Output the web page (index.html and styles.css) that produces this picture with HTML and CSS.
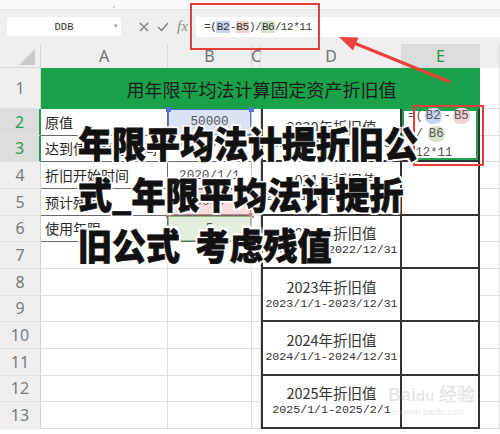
FILE: index.html
```html
<!DOCTYPE html>
<html lang="zh-CN">
<head>
<meta charset="utf-8">
<title>年限平均法计提折旧公式</title>
<link rel="stylesheet" href="styles.css">
</head>
<body>
<div class="app">
  <div class="topstrip"><span class="tiny">⌟</span></div>
  <div class="toolbar">
    <div class="namebox"><span class="nb-text">DDB</span><span class="nb-drop">▾</span></div>
    <svg class="ic-x" width="10" height="10" viewBox="0 0 10 10"><path d="M1 1L9 9M9 1L1 9" stroke="#7b7b7b" stroke-width="1.2" fill="none"/></svg>
    <svg class="ic-check" width="12" height="10" viewBox="0 0 12 10"><path d="M1 5L4.5 8.5L11 1" stroke="#7b7b7b" stroke-width="1.2" fill="none"/></svg>
    <span class="fx">fx</span>
    <div class="formula">=(<span class="ref rb">B2</span>-<span class="ref rr">B5</span>)/<span class="ref rg">B6</span>/12*11</div>
  </div>

  <div class="sheet">
    <div class="c corner"><svg width="16" height="16" viewBox="0 0 16 16"><path d="M16 0V16H0Z" fill="#c9c9c9"/></svg></div>
    <div class="c h">A</div>
    <div class="c h">B</div>
    <div class="c h">C</div>
    <div class="c h">D</div>
    <div class="c h hsel">E</div>
    <div class="c h"></div>

    <div class="c rh">1</div>
    <div class="c title">用年限平均法计算固定资产折旧值</div>
    <div class="c"></div>

    <div class="c rh rsel">2</div>
    <div class="c a">原值</div>
    <div class="c b hl-blue">50000<span class="hd hd-bl"></span><span class="hd hd-br"></span></div>
    <div class="c"></div>
    <div class="c d"><span class="d1">2020年折旧值</span><span class="d2">2020/1/1-2020/12/31</span></div>
    <div class="c e esel">
      <div class="eline">=(<span class="pill pb">B2</span>-<span class="pill pr">B5</span></div>
      <div class="eline">)/<span class="pill pg">B6</span></div>
      <div class="eline">/12*11</div>
    </div>
    <div class="c"></div>

    <div class="c rh rsel">3</div>
    <div class="c a">达到使用状态时间</div>
    <div class="c b">2020/1/1</div>
    <div class="c"></div>
    <div class="c"></div>

    <div class="c rh">4</div>
    <div class="c a">折旧开始时间</div>
    <div class="c b">2020/1/1</div>
    <div class="c"></div>
    <div class="c d"><span class="d1">2021年折旧值</span><span class="d2">2021/1/1-2021/12/31</span></div>
    <div class="c e"></div>
    <div class="c"></div>

    <div class="c rh">5</div>
    <div class="c a">预计残值</div>
    <div class="c b hl-red">5000<span class="hd hd-rl"></span><span class="hd hd-rr"></span></div>
    <div class="c"></div>
    <div class="c"></div>

    <div class="c rh">6</div>
    <div class="c a">使用年限</div>
    <div class="c b hl-green">5<span class="hd hd-gl"></span><span class="hd hd-gr"></span></div>
    <div class="c"></div>
    <div class="c d"><span class="d1">2022年折旧值</span><span class="d2">2022/1/1-2022/12/31</span></div>
    <div class="c e"></div>
    <div class="c"></div>

    <div class="c rh">7</div>
    <div class="c"></div>
    <div class="c"></div>
    <div class="c"></div>
    <div class="c"></div>

    <div class="c rh">8</div>
    <div class="c"></div>
    <div class="c"></div>
    <div class="c"></div>
    <div class="c d"><span class="d1">2023年折旧值</span><span class="d2">2023/1/1-2023/12/31</span></div>
    <div class="c e"></div>
    <div class="c"></div>

    <div class="c rh">9</div>
    <div class="c"></div>
    <div class="c"></div>
    <div class="c"></div>
    <div class="c"></div>

    <div class="c rh">10</div>
    <div class="c"></div>
    <div class="c"></div>
    <div class="c"></div>
    <div class="c d"><span class="d1">2024年折旧值</span><span class="d2">2024/1/1-2024/12/31</span></div>
    <div class="c e"></div>
    <div class="c"></div>

    <div class="c rh">11</div>
    <div class="c"></div>
    <div class="c"></div>
    <div class="c"></div>
    <div class="c"></div>

    <div class="c rh">12</div>
    <div class="c"></div>
    <div class="c"></div>
    <div class="c"></div>
    <div class="c d"><span class="d1">2025年折旧值</span><span class="d2">2025/1/1-2025/2/1</span></div>
    <div class="c e"></div>
    <div class="c"></div>

    <div class="c rh">13</div>
    <div class="c"></div>
    <div class="c"></div>
    <div class="c"></div>
    <div class="c"></div>
  </div>

  <div class="redbox-formula"></div>
  <div class="redbox-cell"></div>
  <svg class="arrow" width="500" height="434" viewBox="0 0 500 434">
    <path d="M450 82L354 43" stroke="#e8423c" stroke-width="3" fill="none"/>
    <path d="M339 37L358.5 37.5L353 50.5Z" fill="#e8423c"/>
  </svg>

  <div class="watermark"><span class="wm-big">Bai<span class="wm-paw">du</span> 经验</span><span class="wm-small">jingyan.baidu.com</span></div>

  <div class="headline">
    <span class="hl-line">年限平均法计提折旧公</span>
    <span class="hl-line">式_年限平均法计提折</span>
    <span class="hl-line">旧公式&nbsp; 考虑残值</span>
  </div>
</div>
</body>
</html>
```

FILE: styles.css
```css
* { box-sizing: border-box; }
html, body { margin: 0; padding: 0; }
body {
  width: 500px;
  height: 434px;
  overflow: hidden;
  background: #ffffff;
  font-family: "Noto Sans CJK SC", "Noto Sans", sans-serif;
}
.app {
  position: relative;
  width: 500px;
  height: 434px;
  overflow: hidden;
}
.topstrip {
  height: 10px;
  background: #fafafa;
  border-bottom: 1px solid #e6e6e6;
  position: relative;
}
.tiny {
  position: absolute;
  left: 112px;
  top: 0;
  font-size: 7px;
  line-height: 8px;
  color: #999;
}
.toolbar {
  height: 34px;
  background: #efefef;
  display: flex;
  align-items: flex-start;
  padding-top: 7px;
}
.namebox {
  margin-left: 7px;
  width: 114px;
  height: 19px;
  background: #ffffff;
  border-radius: 3px;
  display: flex;
  align-items: center;
  position: relative;
}
.nb-text {
  flex: 1;
  text-align: center;
  font-family: "Liberation Mono", monospace;
  font-size: 10.5px;
  color: #333;
}
.nb-drop {
  position: absolute;
  right: 3px;
  top: 3px;
  font-size: 7px;
  color: #999;
}
.ic-x { margin-left: 18px; margin-top: 5px; }
.ic-check { margin-left: 8px; margin-top: 5px; }
.fx {
  margin-left: 8px;
  font-family: "Liberation Serif", serif;
  font-style: italic;
  font-size: 15px;
  color: #8a8a8a;
  line-height: 19px;
  width: 13px;
}
.formula {
  margin-left: 6px;
  flex: 1;
  height: 20px;
  background: #ffffff;
  border-radius: 3px 0 0 3px;
  padding-left: 8px;
  font-family: "Liberation Mono", monospace;
  font-size: 11px;
  letter-spacing: -0.45px;
  line-height: 20px;
  color: #333;
}
.ref { padding: 0 0.5px; }
.rb { background: #c7d3ee; }
.rr { background: #f0cfcf; }
.rg { background: #d5e2c9; }

.sheet {
  display: grid;
  grid-template-columns: 41px 127px 84px 9px 141px 78px 20px;
  grid-template-rows: 24px 41px repeat(12, 26.667px);
}
.c {
  border-right: 1px solid #dedede;
  border-bottom: 1px solid #dedede;
  display: flex;
  align-items: center;
  min-width: 0;
  white-space: nowrap;
  position: relative;
}
.corner {
  background: #efefef;
  justify-content: flex-end;
  align-items: flex-end;
  padding: 0 5px 2px 0;
  border-color: #d6d6d6;
}
.h {
  background: #efefef;
  justify-content: center;
  font-family: "Noto Sans", sans-serif;
  font-size: 16px;
  color: #6f6f6f;
  border-right: 1px solid #dadada;
  border-bottom: none;
}
.hsel {
  background: #dcdcdc;
  color: #1f9a4b;
}
.rh {
  background: #efefef;
  justify-content: center;
  font-family: "Noto Sans", sans-serif;
  font-size: 16px;
  color: #7a7a7a;
  border-right: 1px solid #d2d2d2;
  border-bottom: 1px solid #e2e2e2;
}
.rsel {
  background: #dcdcdc;
  color: #2a9a52;
  border-right: 2px solid #2a9a52;
}
.title {
  grid-column: span 5;
  background: #19a24a;
  justify-content: center;
  font-size: 18px;
  color: #1c1c1c;
  border-right: none;
  border-bottom: none;
  padding-left: 2px;
}
.a {
  border-right: 1px solid #6a6a6a;
  border-bottom: 1px solid #6a6a6a;
  padding-left: 4px;
  font-size: 14px;
  color: #2a2a2a;
}
.b {
  justify-content: center;
  border-right: 1px solid #c8c8c8;
  border-bottom: 1px solid #6a6a6a;
  font-family: "Liberation Mono", monospace;
  font-size: 12.7px;
  color: #555;
}
.hl-blue { background: #dae3f4; box-shadow: inset 0 0 0 1px #5576d4; }
.hl-red { background: #f6dede; box-shadow: inset 0 0 0 1px #c98585; }
.hl-green { background: #e2eedb; box-shadow: inset 0 0 0 1px #93b583; }
.hd {
  position: absolute;
  width: 5px;
  height: 5px;
  top: -2px;
}
.hd-bl, .hd-br { background: #5576d4; }
.hd-rl, .hd-rr { background: #c98585; top: auto; bottom: -3px; }
.hd-gl, .hd-gr { background: #93b583; top: auto; bottom: -3px; }
.hd-bl, .hd-rl, .hd-gl { left: -2px; }
.hd-br, .hd-rr, .hd-gr { right: -3px; }

.d {
  grid-row: span 2;
  flex-direction: column;
  justify-content: center;
  border-left: 2px solid #333;
  border-right: 2px solid #333;
  border-bottom: 2px solid #333;
  color: #333;
}
.d1 {
  font-size: 14.5px;
  line-height: 17px;
}
.d2 {
  font-family: "Liberation Mono", monospace;
  font-size: 11.6px;
  line-height: 17px;
}
.e {
  grid-row: span 2;
  flex-direction: column;
  justify-content: center;
  align-items: flex-start;
  border-right: 2px solid #333;
  border-bottom: 2px solid #333;
}
.esel {
  box-shadow: inset 0 0 0 2px #22a04e;
  padding-left: 6px;
}
.eline {
  font-family: "Liberation Mono", monospace;
  font-size: 12.3px;
  line-height: 18.5px;
  color: #555;
  white-space: pre;
}
.pill {
  border-radius: 7px;
  padding: 1px 1px;
  margin: 0 2px;
}
.pb { background: #c9d4ef; }
.pr { background: #f1d1d1; }
.pg { background: #d7e4cb; margin-left: 5px; }

.redbox-formula {
  position: absolute;
  left: 190px;
  top: 3px;
  width: 130px;
  height: 47px;
  border: 2px solid #e53d3a;
}
.redbox-cell {
  position: absolute;
  left: 413px;
  top: 105px;
  width: 71px;
  height: 61px;
  border: 2.5px solid #e53d3a;
}
.arrow {
  position: absolute;
  left: 0;
  top: 0;
}
.watermark {
  position: absolute;
  left: 388px;
  top: 384px;
  display: flex;
  flex-direction: column;
  align-items: flex-start;
  color: rgba(200, 200, 200, 0.45);
  white-space: nowrap;
}
.wm-big {
  font-family: "Liberation Sans", sans-serif;
  font-size: 18px;
  font-weight: 700;
  line-height: 22px;
  white-space: nowrap;
}
.wm-paw { font-size: 15px; }
.wm-small {
  font-family: "Liberation Sans", sans-serif;
  font-size: 9px;
  line-height: 11px;
  margin-left: 4px;
}
.headline {
  position: absolute;
  left: 78px;
  top: 117px;
  display: flex;
  flex-direction: column;
  font-family: "Noto Sans CJK SC", sans-serif;
  font-weight: 900;
  font-size: 34px;
  line-height: 47px;
  color: #111;
  white-space: nowrap;
  -webkit-text-stroke: 0.7px #111;
  transform: scaleY(1.08);
  transform-origin: top left;
  text-shadow:
    2px 0 0 #fff, -2px 0 0 #fff, 0 2px 0 #fff, 0 -2px 0 #fff,
    2px 2px 0 #fff, -2px -2px 0 #fff, 2px -2px 0 #fff, -2px 2px 0 #fff;
}
.hl-line { display: block; }
```
